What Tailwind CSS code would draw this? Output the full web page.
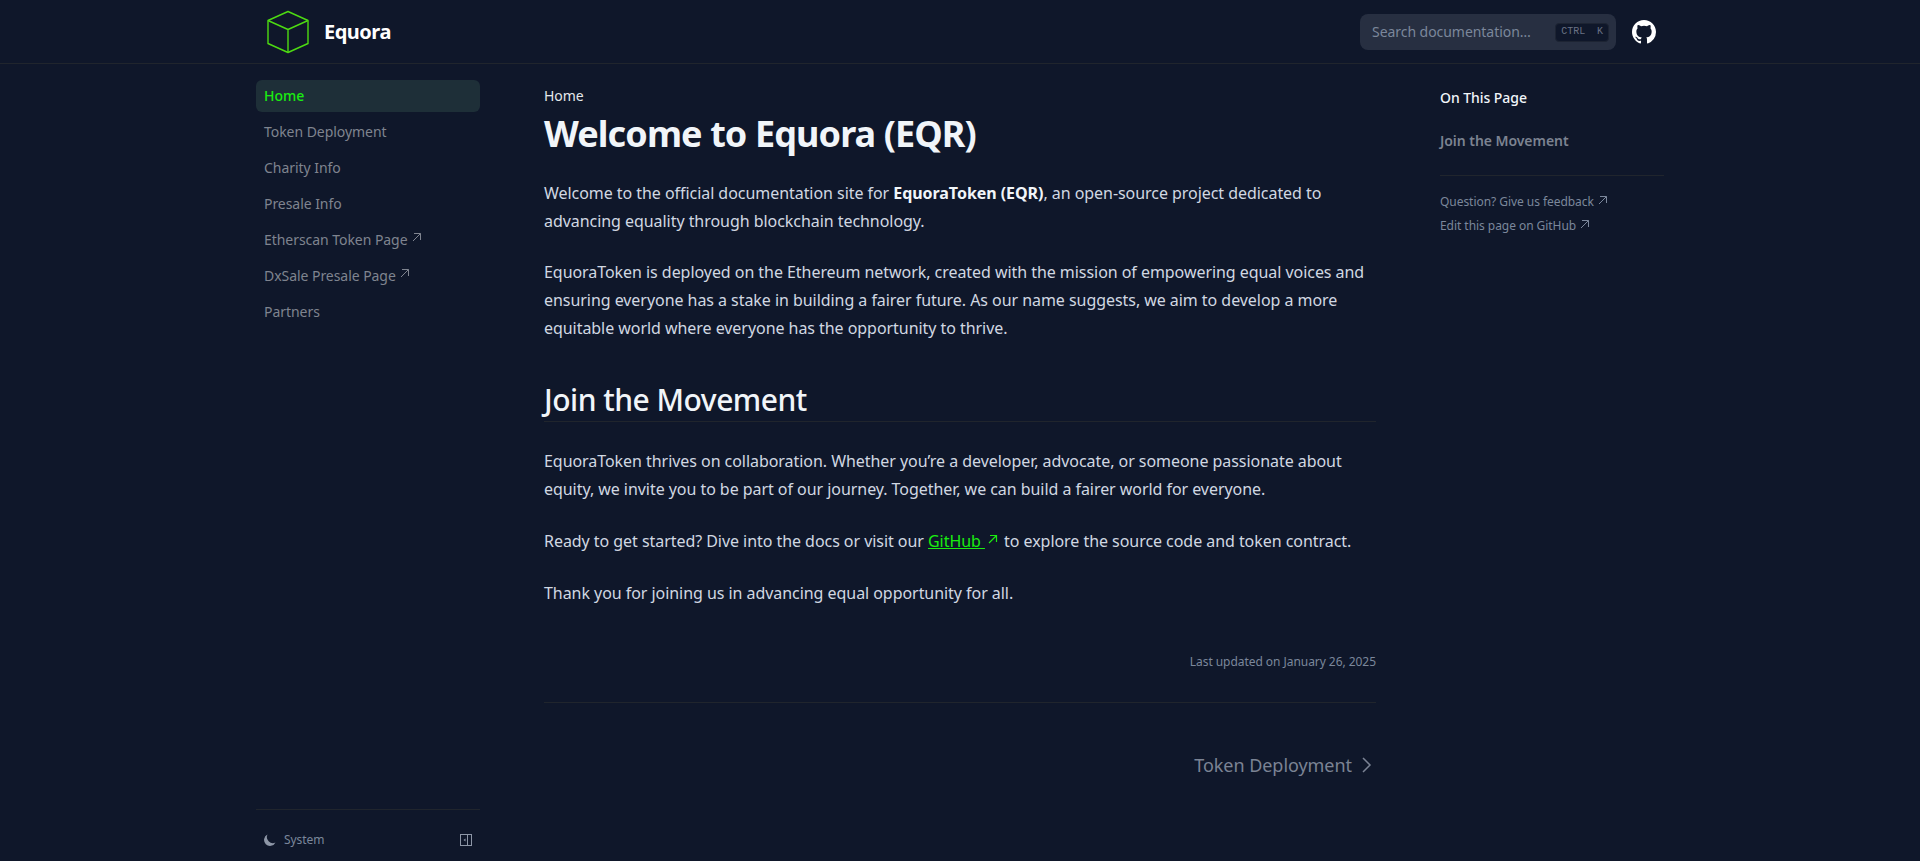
<!DOCTYPE html>
<html lang="en">
<head>
    <meta charset="UTF-8">
    <title>Equora</title>
    <script src="https://cdn.jsdelivr.net/npm/@tailwindcss/browser@4"></script>
</head>
<body class="bg-[#0f172a] text-[#e5e7eb] font-['Noto_Sans',sans-serif] h-[861px] overflow-hidden">
    <!-- navbar -->
    <header class="h-16 border-b border-[#20252d]">
        <nav class="w-[1440px] mx-auto h-[63px] flex items-center px-6 gap-4">
            <div class="flex items-center gap-[14px] mr-auto">
                <svg class="w-[44px] h-[44px] ml-[2px]" viewBox="0 0 44 44" fill="none" stroke="#4ddb12" stroke-width="1.4" stroke-linejoin="round">
                    <path d="M22 1.5 L42 10.5 V33.5 L22 42.5 L2 33.5 V10.5 Z"/>
                    <path d="M2 10.5 L22 19.5 L42 10.5 M22 19.5 V42.5"/>
                </svg>
                <span class="text-xl font-bold tracking-tight text-white">Equora</span>
            </div>
            <div class="w-64 h-9 rounded-lg bg-[#272f41] flex items-center pl-3 pr-[7px] text-sm tracking-[-0.05px] text-[#7b879b]">
                <span class="mr-auto">Search documentation…</span>
                <kbd class="h-[19px] mt-[2px] px-[5px] flex items-center rounded-[4px] bg-[#0f172a] border border-[#1d2433] text-[10px] text-[#6a7285] font-['Liberation_Mono',monospace]">CTRL&nbsp;&nbsp;K</kbd>
            </div>
            <svg class="w-6 h-6" viewBox="0 0 24 24" fill="#fff">
                <path d="M12 0C5.37 0 0 5.37 0 12c0 5.3 3.44 9.8 8.2 11.39.6.11.82-.26.82-.58v-2.03c-3.34.73-4.04-1.61-4.04-1.61-.55-1.39-1.33-1.76-1.33-1.76-1.09-.74.08-.73.08-.73 1.2.09 1.84 1.24 1.84 1.24 1.07 1.83 2.81 1.3 3.5 1 .1-.78.42-1.31.76-1.61-2.67-.3-5.47-1.33-5.47-5.93 0-1.31.47-2.38 1.24-3.22-.13-.3-.54-1.52.11-3.18 0 0 1.01-.32 3.3 1.23a11.5 11.5 0 0 1 6 0c2.29-1.55 3.3-1.23 3.3-1.23.65 1.66.24 2.88.12 3.18.77.84 1.23 1.91 1.23 3.22 0 4.61-2.8 5.63-5.48 5.92.43.37.81 1.1.81 2.22v3.29c0 .32.22.7.83.58A12 12 0 0 0 24 12c0-6.63-5.37-12-12-12z"/>
            </svg>
        </nav>
    </header>

    <div class="w-[1440px] mx-auto flex h-[797px]">
        <!-- sidebar -->
        <aside class="w-64 shrink-0 px-4 pt-4 flex flex-col text-sm tracking-[-0.05px] text-[#7f848f]">
            <ul class="flex flex-col gap-1 flex-1">
                <li class="h-8 px-2 flex items-center rounded-md bg-[#1e2f38] text-[#1aec10] font-medium">Home</li>
                <li class="h-8 px-2 flex items-center">Token Deployment</li>
                <li class="h-8 px-2 flex items-center">Charity Info</li>
                <li class="h-8 px-2 flex items-center">Presale Info</li>
                <li class="h-8 px-2 flex items-center">Etherscan Token Page
                    <svg class="w-2.5 h-2.5 ml-1 -mt-1.5" viewBox="0 0 10 10" fill="none" stroke="currentColor"><path d="M2 1.5h6.5V8M8.5 1.5L1 9"/></svg>
                </li>
                <li class="h-8 px-2 flex items-center">DxSale Presale Page
                    <svg class="w-2.5 h-2.5 ml-1 -mt-1.5" viewBox="0 0 10 10" fill="none" stroke="currentColor"><path d="M2 1.5h6.5V8M8.5 1.5L1 9"/></svg>
                </li>
                <li class="h-8 px-2 flex items-center">Partners</li>
            </ul>
            <div class="border-t border-[#20252d] h-[52px] pt-[20px] px-2 flex items-start justify-between text-xs text-[#7b879b]">
                <span class="flex items-center gap-2 h-5">
                    <svg class="w-3 h-3" viewBox="2 2 16 16" fill="#8d96a6"><path d="M17.3 13.35A8 8 0 0 1 6.65 2.7 8 8 0 1 0 17.3 13.35z"/></svg>
                    System
                </span>
                <span class="h-5 flex items-center">
                    <svg class="w-3 h-3" viewBox="0 0 12 12" fill="none" stroke="#8d96a6"><rect x="0.5" y="0.5" width="11" height="11"/><path d="M7.5 0.5v11"/><path d="M5.5 4.5v3L3.5 6z" fill="#8d96a6" stroke="none"/></svg>
                </span>
            </div>
        </aside>

        <!-- article -->
        <main class="w-[832px] shrink-0 ml-[48px] pt-4 text-base leading-7 tracking-[-0.05px] text-[#d1d8e2]">
            <div class="text-sm leading-[20px] text-[#e5e7eb] mt-[6px]">Home</div>
            <h1 class="mt-[6px] text-4xl leading-[44px] font-bold tracking-tight text-[#f1f5f9]">Welcome to Equora (EQR)</h1>
            <p class="mt-[23px]">Welcome to the official documentation site for <b class="font-bold text-[#f1f5f9]">EquoraToken (EQR)</b>, an open-source project dedicated to advancing equality through blockchain technology.</p>
            <p class="mt-[23px]">EquoraToken is deployed on the Ethereum network, created with the mission of empowering equal voices and ensuring everyone has a stake in building a fairer future. As our name suggests, we aim to develop a more equitable world where everyone has the opportunity to thrive.</p>
            <h2 class="mt-10 pb-[3px] text-3xl leading-9 font-medium tracking-[-0.5px] text-[#f1f5f9] border-b border-[#20252d]">Join the Movement</h2>
            <p class="mt-[25px]">EquoraToken thrives on collaboration. Whether you’re a developer, advocate, or someone passionate about equity, we invite you to be part of our journey. Together, we can build a fairer world for everyone.</p>
            <p class="mt-6">Ready to get started? Dive into the docs or visit our <a class="text-[#1aec10] underline">GitHub </a><svg class="inline w-2.5 h-2.5 ml-[3px] mr-[2px] mb-2 text-[#1aec10]" viewBox="0 0 10 10" fill="none" stroke="currentColor" stroke-width="1.2"><path d="M2 1.5h6.5V8M8.5 1.5L1 9"/></svg> to explore the source code and token contract.</p>
            <p class="mt-6">Thank you for joining us in advancing equal opportunity for all.</p>
            <div class="mt-[45px] text-xs leading-5 text-right text-[#7b879b]">Last updated on January 26, 2025</div>
            <div class="mt-[30px] border-t border-[#20252d] pt-[48px] flex justify-end items-center text-lg text-[#7b8394]">
                Token Deployment
                <svg class="w-5 h-5 ml-[4px]" viewBox="0 0 20 20" fill="none" stroke="currentColor" stroke-width="1.5"><path d="M7 3l7 7-7 7"/></svg>
            </div>
        </main>

        <!-- toc -->
        <aside class="w-60 shrink-0 ml-[64px] pr-4 pt-4 text-xs tracking-[-0.05px]">
            <div class="text-sm leading-5 font-medium text-[#f1f5f9] mt-[8px]">On This Page</div>
            <div class="mt-[23px] text-sm leading-5 font-semibold text-[#7c8391]">Join the Movement</div>
            <div class="mt-6 pt-[18px] border-t border-[#20252d] text-[#7b879b] flex flex-col gap-2 leading-4">
                <span class="flex items-center">Question? Give us feedback <svg class="w-2.5 h-2.5 ml-1 -mt-1" viewBox="0 0 10 10" fill="none" stroke="currentColor"><path d="M2 1.5h6.5V8M8.5 1.5L1 9"/></svg></span>
                <span class="flex items-center">Edit this page on GitHub <svg class="w-2.5 h-2.5 ml-1 -mt-1" viewBox="0 0 10 10" fill="none" stroke="currentColor"><path d="M2 1.5h6.5V8M8.5 1.5L1 9"/></svg></span>
            </div>
        </aside>
    </div>
</body>
</html>
